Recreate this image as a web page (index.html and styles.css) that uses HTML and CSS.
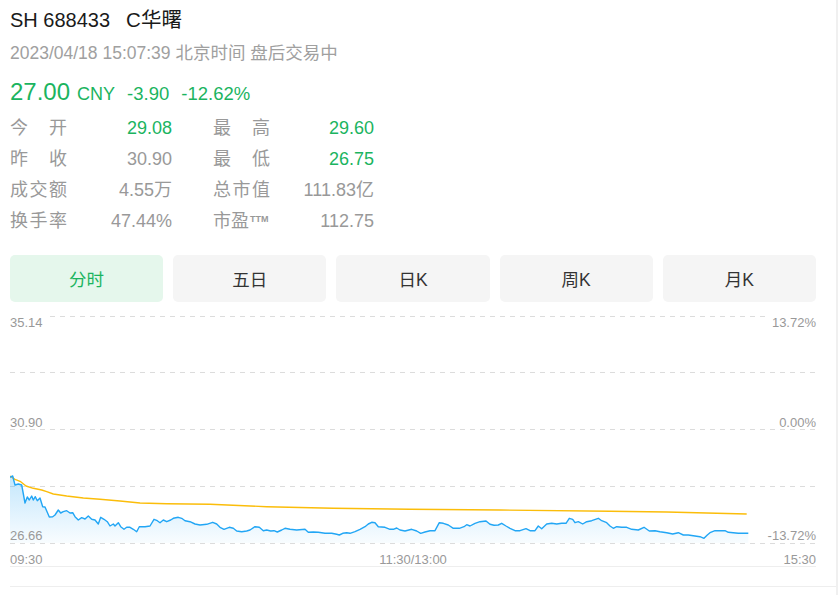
FILE: index.html
```html
<!DOCTYPE html>
<html lang="zh-CN">
<head>
<meta charset="utf-8">
<title>SH 688433 C华曙</title>
<link rel="stylesheet" href="styles.css">
</head>
<body>
<div class="page">
  <div class="main">
    <div class="title">SH 688433<span class="name">C华曙</span></div>
    <div class="date">2023/04/18 15:07:39 北京时间 盘后交易中</div>
    <div class="price"><span class="last">27.00</span> <span class="cur">CNY</span><span class="chg">-3.90</span><span class="chg">-12.62%</span></div>

    <div class="stats">
      <div class="stat"><span class="lbl"><i>今</i><i>开</i></span><span class="val up">29.08</span></div>
      <div class="stat"><span class="lbl"><i>最</i><i>高</i></span><span class="val up">29.60</span></div>
      <div class="stat"><span class="lbl"><i>昨</i><i>收</i></span><span class="val">30.90</span></div>
      <div class="stat"><span class="lbl"><i>最</i><i>低</i></span><span class="val up">26.75</span></div>
      <div class="stat"><span class="lbl"><i>成</i><i>交</i><i>额</i></span><span class="val">4.55万</span></div>
      <div class="stat"><span class="lbl"><i>总</i><i>市</i><i>值</i></span><span class="val">111.83亿</span></div>
      <div class="stat"><span class="lbl"><i>换</i><i>手</i><i>率</i></span><span class="val">47.44%</span></div>
      <div class="stat"><span class="lbl lbl-free">市盈<small class="ttm">TTM</small></span><span class="val">112.75</span></div>
    </div>

    <div class="tabs">
      <div class="tab active">分时</div>
      <div class="tab">五日</div>
      <div class="tab">日K</div>
      <div class="tab">周K</div>
      <div class="tab">月K</div>
    </div>

    <div class="chart">
      <svg class="plot" width="806" height="251" viewBox="0 0 806 251">
        <defs>
          <linearGradient id="fillg" x1="0" y1="0" x2="0" y2="1">
            <stop offset="0" stop-color="#2aa8f5" stop-opacity="0.28"/>
            <stop offset="1" stop-color="#2aa8f5" stop-opacity="0.03"/>
          </linearGradient>
        </defs>
        <g class="grid">
          <line x1="0" y1="0.5" x2="806" y2="0.5"/>
          <line x1="0" y1="56.5" x2="806" y2="56.5"/>
          <line x1="0" y1="113.5" x2="806" y2="113.5"/>
          <line x1="0" y1="170.5" x2="806" y2="170.5"/>
          <line x1="0" y1="227.5" x2="806" y2="227.5"/>
        </g>
        <line class="axis" x1="0" y1="250.5" x2="806" y2="250.5"/>
        <g transform="translate(-10 -316)">
          <polygon class="area" points="10,477.3 12.7,476 15,485 18.3,484 21.7,485 25,503 27.3,497 29.3,500 31.7,496 33.3,500 35.3,496.7 37.3,500.7 40,498 42.7,506.7 45,507 49.3,517 52.7,516.7 55,515 58.3,510 60.7,513 63.3,511.7 66.7,510.7 70,513 72.7,512.7 75,516.7 78.3,520 81.7,517.7 85,519 88.3,516 91.7,519.3 95,520 98.3,524 100.7,517.3 104,519.3 107.3,521.7 110,526 113.3,524 115,526 118.3,522.7 120.7,526.7 124,529.3 126.7,527.3 130,527.3 133.3,529.3 136.7,531.7 139.3,526.7 145,526.7 150,526 154,519.3 157.3,520.7 160,522.7 163.3,520 166.7,521.7 170.7,520 173.3,518.3 178.3,517.3 181.7,518.3 185,520.7 190,521.7 195,524 200,525 206.7,524.3 212.7,522.3 216.7,524 220,527.3 224,529.3 229.3,527.3 233.3,528.3 236.7,531 241.7,531.7 246.7,531 250,530 255,526.7 259.3,527.3 263.3,530.7 266.7,530 270.7,531 274,530.7 277.3,532 281.7,530 285,528.3 290,529.3 296.7,530 305,529.3 308.3,532.3 313.3,532 318.3,532.3 325,533.3 331.7,533.3 336.7,534.3 339.3,535 342.7,533.3 346.7,532.7 350,533.3 355,531.7 360,529.3 365,526.7 368.3,524 371.7,522.3 375,522.7 378.3,526.7 385,527.3 390,529.3 393.3,529.3 396.7,528 400,530 405,531 411.7,529.3 416.7,531 420.7,533.3 425,532 430,530.7 435,530.7 439.3,522.7 443.3,523.3 448.3,525 453.3,528.3 459.3,528.3 464,526.7 466.7,524.7 470,526 475,523.3 480,521.7 486,521 490,524.3 494,525.3 498.3,525 501.7,523.3 506,526 510,528.3 515,530.7 520,530.7 526,528.7 530,530.7 535,530.7 538.3,526 541.7,528.7 546.7,524 551.7,523.3 556.7,524 561.7,523.3 566,523.3 569.3,518.3 572.7,519.3 575,522.7 578.3,521.7 582.7,524 586.7,521.7 591.7,520.7 598.3,518.3 601.7,520.7 606.7,522.7 610,526 613.3,528.3 616.7,526.7 621.7,527.3 626.7,527.3 631.7,529.3 638.3,530 644,527.3 649.3,531 655,530.7 660,531.7 666.7,532.7 672.7,534 678.3,532.7 683.3,535 688.3,535 693.3,535.7 700,536.7 704,538.3 707.3,535 710,532.7 715,530.7 720,530.7 725,530.7 728.3,532.3 733.3,532.7 738.3,533.3 743.3,533.3 748.3,533.3 748.3,543 10,543"/>
          <polyline class="avg" points="10,476 15,479.3 20.7,481.7 26,486 33.3,488.3 41.7,490 46.7,491.7 53.3,494 66.7,496 83.3,498 100,499.3 120,501 140,503 166.7,503.7 210,504.3 266.7,506.7 333.3,508.3 410,509.3 500,510 610,511.3 666.7,512 746.7,514"/>
          <polyline class="price-line" points="10,477.3 12.7,476 15,485 18.3,484 21.7,485 25,503 27.3,497 29.3,500 31.7,496 33.3,500 35.3,496.7 37.3,500.7 40,498 42.7,506.7 45,507 49.3,517 52.7,516.7 55,515 58.3,510 60.7,513 63.3,511.7 66.7,510.7 70,513 72.7,512.7 75,516.7 78.3,520 81.7,517.7 85,519 88.3,516 91.7,519.3 95,520 98.3,524 100.7,517.3 104,519.3 107.3,521.7 110,526 113.3,524 115,526 118.3,522.7 120.7,526.7 124,529.3 126.7,527.3 130,527.3 133.3,529.3 136.7,531.7 139.3,526.7 145,526.7 150,526 154,519.3 157.3,520.7 160,522.7 163.3,520 166.7,521.7 170.7,520 173.3,518.3 178.3,517.3 181.7,518.3 185,520.7 190,521.7 195,524 200,525 206.7,524.3 212.7,522.3 216.7,524 220,527.3 224,529.3 229.3,527.3 233.3,528.3 236.7,531 241.7,531.7 246.7,531 250,530 255,526.7 259.3,527.3 263.3,530.7 266.7,530 270.7,531 274,530.7 277.3,532 281.7,530 285,528.3 290,529.3 296.7,530 305,529.3 308.3,532.3 313.3,532 318.3,532.3 325,533.3 331.7,533.3 336.7,534.3 339.3,535 342.7,533.3 346.7,532.7 350,533.3 355,531.7 360,529.3 365,526.7 368.3,524 371.7,522.3 375,522.7 378.3,526.7 385,527.3 390,529.3 393.3,529.3 396.7,528 400,530 405,531 411.7,529.3 416.7,531 420.7,533.3 425,532 430,530.7 435,530.7 439.3,522.7 443.3,523.3 448.3,525 453.3,528.3 459.3,528.3 464,526.7 466.7,524.7 470,526 475,523.3 480,521.7 486,521 490,524.3 494,525.3 498.3,525 501.7,523.3 506,526 510,528.3 515,530.7 520,530.7 526,528.7 530,530.7 535,530.7 538.3,526 541.7,528.7 546.7,524 551.7,523.3 556.7,524 561.7,523.3 566,523.3 569.3,518.3 572.7,519.3 575,522.7 578.3,521.7 582.7,524 586.7,521.7 591.7,520.7 598.3,518.3 601.7,520.7 606.7,522.7 610,526 613.3,528.3 616.7,526.7 621.7,527.3 626.7,527.3 631.7,529.3 638.3,530 644,527.3 649.3,531 655,530.7 660,531.7 666.7,532.7 672.7,534 678.3,532.7 683.3,535 688.3,535 693.3,535.7 700,536.7 704,538.3 707.3,535 710,532.7 715,530.7 720,530.7 725,530.7 728.3,532.3 733.3,532.7 738.3,533.3 743.3,533.3 748.3,533.3"/>
        </g>
      </svg>
      <span class="yl l t0">35.14</span>
      <span class="yl l t1">30.90</span>
      <span class="yl l t2">26.66</span>
      <span class="yl r t0">13.72%</span>
      <span class="yl r t1">0.00%</span>
      <span class="yl r t2">-13.72%</span>
      <span class="xl x0">09:30</span>
      <span class="xl x1">11:30/13:00</span>
      <span class="xl x2">15:30</span>
    </div>
  </div>
  <div class="foot"></div>
</div>
</body>
</html>
```

FILE: styles.css
```css
html, body {
  margin: 0;
  padding: 0;
  background: #fff;
}

body {
  font-family: "Liberation Sans", Arial, "Noto Sans CJK SC", sans-serif;
  color: #222;
}

.page {
  width: 836px;
  height: 595px;
  border-right: 2px solid #f0f0f0;
  overflow: hidden;
}

.main {
  margin-left: 10px;
  width: 806px;
}

.title {
  padding-top: 6px;
  font-size: 20px;
  line-height: 28px;
  color: #1a1a1a;
}

.title .name {
  margin-left: 16px;
  font-size: 20.5px;
}

.date {
  margin-top: 7px;
  font-size: 17.5px;
  line-height: 24px;
  color: #a0a0a0;
}

.price {
  margin-top: 11px;
  height: 32px;
  line-height: 32px;
  font-size: 18px;
  color: #1bb45f;
}

.price .last {
  font-size: 24px;
}

.price .cur {
  margin-left: 2px;
}

.price .chg {
  margin-left: 12px;
  font-size: 18.5px;
}

.stats {
  margin-top: 5px;
  display: grid;
  grid-template-columns: 162px 161px;
  column-gap: 41px;
  font-size: 18px;
  line-height: 31px;
  color: #999;
}

.stat {
  display: flex;
  justify-content: space-between;
}

.lbl {
  width: 57px;
  display: flex;
  justify-content: space-between;
}

.lbl i {
  font-style: normal;
}

.lbl.lbl-free {
  justify-content: flex-start;
  white-space: nowrap;
}

.ttm {
  font-size: 9px;
  font-weight: bold;
  position: relative;
  top: -2px;
  margin-left: 1px;
}

.val.up {
  color: #1bb45f;
}

.tabs {
  margin-top: 18px;
  display: flex;
  gap: 10px;
}

.tab {
  flex: 1;
  height: 47px;
  border-radius: 5px;
  background: #f5f5f5;
  display: flex;
  align-items: center;
  justify-content: center;
  font-size: 17.5px;
  color: #333;
}

.tab.active {
  background: #e5f7ec;
  color: #1bb45f;
}

.chart {
  position: relative;
  margin-top: 14px;
  height: 251px;
}

.plot {
  display: block;
}

.grid line {
  stroke: #dcdcdc;
  stroke-width: 1;
  stroke-dasharray: 5 5;
}

.axis {
  stroke: #eeeeee;
  stroke-width: 1;
}

.area {
  fill: url(#fillg);
  stroke: none;
}

.avg {
  fill: none;
  stroke: #fbbd0a;
  stroke-width: 1.4;
  stroke-linejoin: round;
}

.price-line {
  fill: none;
  stroke: #22a6f5;
  stroke-width: 1.4;
  stroke-linejoin: round;
}

.yl, .xl {
  position: absolute;
  font-size: 13px;
  line-height: 13px;
  color: #999;
}

.yl.l { left: 0; }
.yl.r { right: 0; }
.yl.l.t0 { background: #fff; padding-right: 2px; }
.yl.r.t0 { background: #fff; padding-left: 2px; }
.t0 { top: 0; }
.t1 { top: 100px; }
.t2 { top: 213px; }

.xl { top: 237px; }
.x0 { left: 0; }
.x1 { left: 50%; transform: translateX(-50%); }
.x2 { right: 0; }

.foot {
  margin-left: 10px;
  margin-top: 19px;
  border-top: 1px solid #eeeeee;
}
```
